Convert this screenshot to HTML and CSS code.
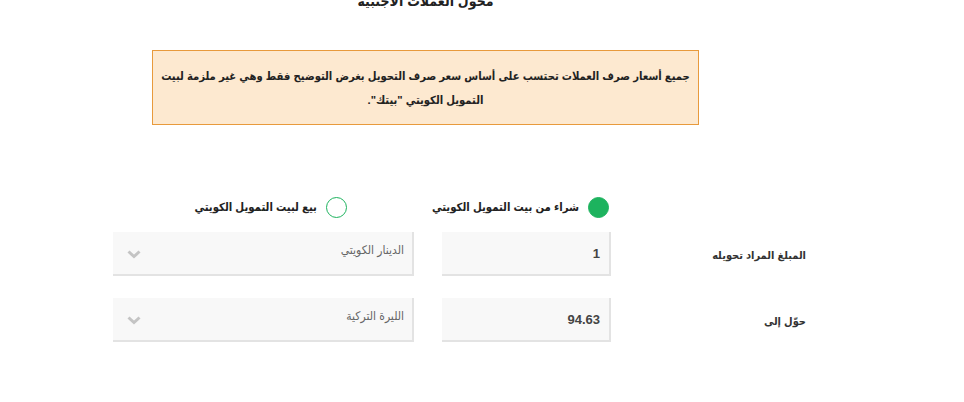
FILE: index.html
```html
<!DOCTYPE html>
<html lang="ar" dir="rtl">
<head>
<meta charset="utf-8">
<link rel="stylesheet" href="styles.css">
</head>
<body>
<div class="page">
  <div class="intro">
    <h2 class="title">محول العملات الأجنبية</h2>
    <div class="notice">جميع أسعار صرف العملات تحتسب على أساس سعر صرف التحويل بغرض التوضيح فقط وهي غير ملزمة لبيت<br>التمويل الكويتي "بيتك".</div>
  </div>
  <div class="form">
    <div class="radios">
      <label class="radio"><span class="dot checked"></span><span>شراء من بيت التمويل الكويتي</span></label>
      <label class="radio"><span class="dot"></span><span>بيع لبيت التمويل الكويتي</span></label>
    </div>
    <div class="label">المبلغ المراد تحويله</div>
    <div class="field">1</div>
    <div class="select"><span>الدينار الكويتي</span><svg class="chev" width="14" height="9" viewBox="0 0 14 9"><path d="M1.5 1.5 L7 6.5 L12.5 1.5" fill="none" stroke="#c4c4c4" stroke-width="3"/></svg></div>
    <div class="label">حوّل إلى</div>
    <div class="field">94.63</div>
    <div class="select"><span>الليرة التركية</span><svg class="chev" width="14" height="9" viewBox="0 0 14 9"><path d="M1.5 1.5 L7 6.5 L12.5 1.5" fill="none" stroke="#c4c4c4" stroke-width="3"/></svg></div>
  </div>
</div>
</body>
</html>
```
FILE: styles.css
```css
html, body {
  margin: 0;
  padding: 0;
  background: #fff;
}
body {
  font-family: "Liberation Sans", "DejaVu Sans Condensed", "DejaVu Sans", sans-serif;
  color: #333;
  direction: rtl;
}
.page {
  width: 964px;
  overflow: hidden;
  height: 402px;
}
.intro {
  margin-right: 265px;
  width: 547px;
}
.title {
  margin: -10px 0 0;
  height: 60px;
  font-size: 14px;
  line-height: 22px;
  font-weight: bold;
  text-align: center;
  color: #222;
}
.notice {
  box-sizing: border-box;
  height: 75px;
  border: 1px solid #e89a3c;
  background: #fde9d0;
  padding: 13px 2px 0;
  font-size: 11.2px;
  line-height: 24px;
  font-weight: bold;
  text-align: center;
  white-space: nowrap;
  color: #222;
}
.form {
  margin: 72px 158px 0 0;
  width: 693px;
  display: grid;
  grid-template-columns: 195px 169px 329px;
  column-gap: 0;
  row-gap: 22px;
}
.form .select {
  margin-right: 28px;
}
.radios {
  grid-column: 2 / 4;
  display: flex;
  gap: 85px;
  height: 21px;
  margin-bottom: -8px;
  margin-right: 2px;
}
.radio {
  display: flex;
  align-items: center;
  gap: 9px;
  font-size: 11.3px;
  font-weight: bold;
  color: #222;
}
.dot {
  box-sizing: border-box;
  width: 21px;
  height: 21px;
  border-radius: 50%;
  border: 1px solid #1db35e;
  background: #fff;
}
.dot.checked {
  background: #1db35e;
}
.label {
  display: flex;
  align-items: center;
  padding-top: 2px;
  font-size: 11px;
  font-weight: bold;
  color: #333;
}
.field, .select {
  box-sizing: border-box;
  height: 44px;
  background: #f8f8f8;
  border-right: 2px solid #e3e3e3;
  border-bottom: 2px solid #e3e3e3;
  display: flex;
  align-items: center;
}
.field {
  padding-right: 9px;
  font-size: 13px;
  font-weight: bold;
  color: #444;
}
.select {
  justify-content: space-between;
  padding: 0 8px 6px 14px;
  font-size: 12px;
  color: #666;
}
.chev {
  margin-top: 8px;
}
```
